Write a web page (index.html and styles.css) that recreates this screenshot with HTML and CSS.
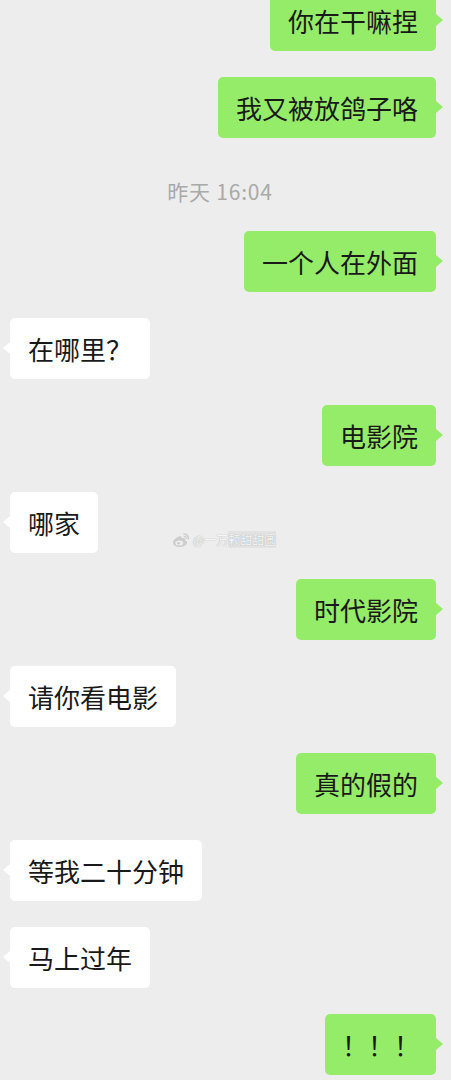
FILE: index.html
```html
<!DOCTYPE html>
<html lang="zh-CN">
<head>
  <meta charset="UTF-8" />
  <meta name="viewport" content="width=device-width, initial-scale=1.0"/>
  <title>聊天</title>
  <link rel="stylesheet" href="styles.css">
</head>
<body>

  <div class="chat">
    <div class="row me"><div class="bubble">你在干嘛捏</div></div>
    <div class="row me"><div class="bubble">我又被放鸽子咯</div></div>

    <div class="time">昨天 16:04</div>

    <div class="row me"><div class="bubble">一个人在外面</div></div>
    <div class="row them"><div class="bubble">在哪里？</div></div>
    <div class="row me"><div class="bubble">电影院</div></div>
    <div class="row them"><div class="bubble">哪家</div></div>
    <div class="row me"><div class="bubble">时代影院</div></div>
    <div class="row them"><div class="bubble">请你看电影</div></div>
    <div class="row me"><div class="bubble">真的假的</div></div>
    <div class="row them"><div class="bubble">等我二十分钟</div></div>
    <div class="row them"><div class="bubble">马上过年</div></div>
    <div class="row me"><div class="bubble bangs">！！！</div></div>
  </div>

  <!-- watermark sits over the chat -->
  <div class="watermark">
    <svg class="weibo" width="18" height="16" viewBox="0 0 18 16">
      <path d="M7 4.5c-3 .8-6 3.6-6 6.3C1 13.3 4 15 7.6 15c4.3 0 7.4-2.3 7.4-4.5 0-1.5-1.3-2-2.2-2.3.4-1 .3-2-.6-2.2-.9-.2-2 .3-2.6.6.2-.8.2-1.8-.6-2.2-.6-.3-1.3-.2-2 .1z" fill="#c9c9c9"/>
      <ellipse cx="7.3" cy="11" rx="4" ry="2.6" fill="#ededed"/>
      <circle cx="6.6" cy="11.2" r="1.3" fill="#c9c9c9"/>
      <path d="M12 2.2a4 4 0 0 1 4.4 4.6" stroke="#c9c9c9" stroke-width="1.4" fill="none" stroke-linecap="round"/>
      <path d="M12.2 4.3a1.9 1.9 0 0 1 2.1 2.2" stroke="#c9c9c9" stroke-width="1.2" fill="none" stroke-linecap="round"/>
    </svg>
    <span class="wm-text">@一万<span class="wm-box">颗甜甜圆</span></span>
  </div>

</body>
</html>
```

FILE: styles.css
```css
* {
  box-sizing: border-box;
}

body {
  margin: 0;
  background: #ededed;
  color: #191919;
  font-family: "Noto Sans CJK SC", "Noto Sans", sans-serif;
  height: 100vh;
  overflow: hidden;
  position: relative;
}

.chat {
  display: flex;
  flex-direction: column;
  padding: 0 15px 0 10px;
  margin-top: -10px;
}

.row {
  display: flex;
  margin-bottom: 26px;
}

.row.me {
  justify-content: flex-end;
}

.row.them {
  justify-content: flex-start;
}

.bubble {
  position: relative;
  padding: 18px;
  font-size: 26px;
  line-height: 25px;
  border-radius: 5px;
  background: #fff;
  white-space: nowrap;
}

.bubble.bangs {
  padding: 18px 16px 18px 17px;
}

.me .bubble {
  background: #95ec69;
}

.bubble::after {
  content: '';
  position: absolute;
  top: 24px;
  border-top: 6px solid transparent;
  border-bottom: 6px solid transparent;
}

.me .bubble::after {
  left: 100%;
  border-left: 7px solid #95ec69;
}

.them .bubble::after {
  right: 100%;
  border-right: 7px solid #fff;
}

.time {
  text-align: center;
  font-size: 21px;
  letter-spacing: 0.8px;
  line-height: 24px;
  color: #a9a9a9;
  margin: 15px 0 28px;
  padding-right: 6px;
}

.watermark {
  position: absolute;
  left: 172px;
  top: 531px;
  display: flex;
  align-items: center;
  gap: 3px;
  opacity: 0.9;
}

.wm-text {
  font-size: 12px;
  line-height: 18px;
  color: #f6f6f6;
  text-shadow: 0 0 1px #b5b5b5, 0 0 1px #b5b5b5;
}

.wm-box {
  background: #e2e2e2;
}
```
